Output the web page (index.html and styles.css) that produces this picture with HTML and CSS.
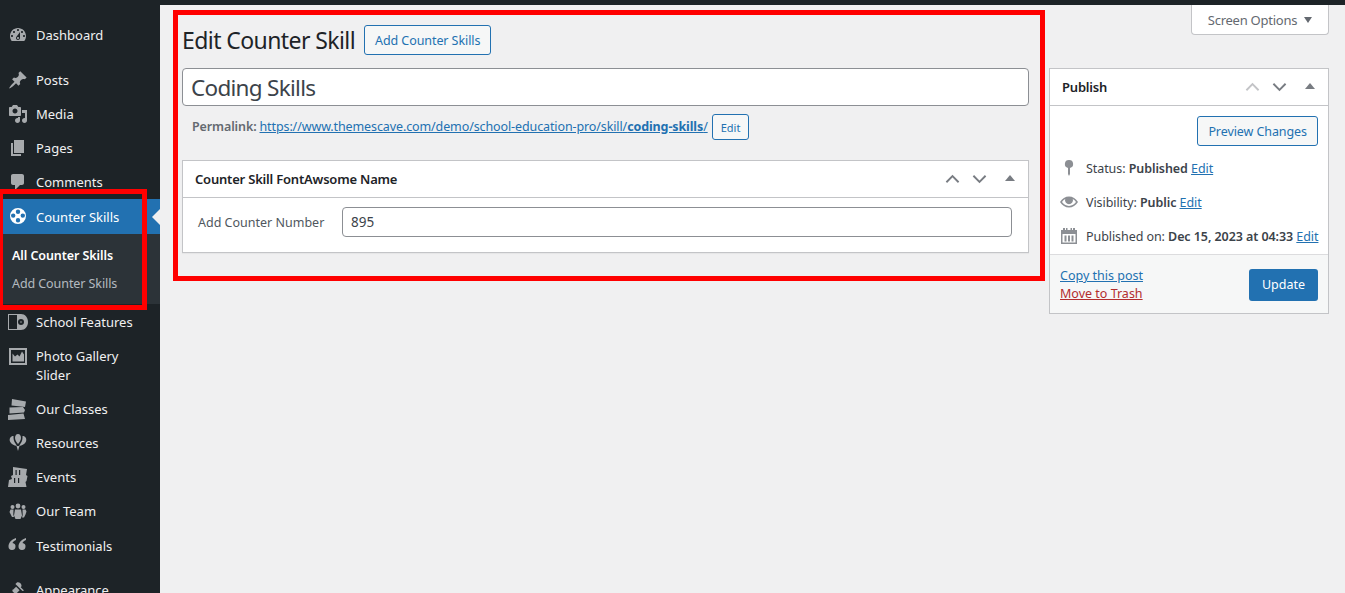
FILE: index.html
```html
<!DOCTYPE html>
<html lang="en">
<head>
<meta charset="utf-8">
<title>Edit Counter Skill</title>
<link rel="stylesheet" href="styles.css">
</head>
<body>
<div class="topbar"></div>
<div class="wrap">
  <nav class="sidebar">
    <ul class="menu">
      <li class="item gap-after"><svg class="ic" viewBox="0 0 20 20"><path fill-rule="evenodd" d="M3.76 16h12.48c1.1-1.37 1.76-3.11 1.76-5 0-4.42-3.58-8-8-8s-8 3.58-8 8c0 1.89.66 3.63 1.76 5zM10 4c.55 0 1 .45 1 1s-.45 1-1 1-1-.45-1-1 .45-1 1-1zM6 6c.55 0 1 .45 1 1s-.45 1-1 1-1-.45-1-1 .45-1 1-1zm8 0c.55 0 1 .45 1 1s-.45 1-1 1-1-.45-1-1 .45-1 1-1zm-5.37 5.55L12 7v6c0 1.1-.9 2-2 2s-2-.9-2-2c0-.57.24-1.08.63-1.45zM4 10c.55 0 1 .45 1 1s-.45 1-1 1-1-.45-1-1 .45-1 1-1zm12 0c.55 0 1 .45 1 1s-.45 1-1 1-1-.45-1-1 .45-1 1-1zm-5 3c0-.55-.45-1-1-1s-1 .45-1 1 .45 1 1 1 1-.45 1-1z"/></svg><span>Dashboard</span></li>
      <li class="item"><svg class="ic" viewBox="0 0 20 20"><path d="M10.44 3.02l1.82-1.82 6.36 6.35-1.83 1.82c-1.05-.68-2.48-.57-3.41.36l-.75.75c-.92.93-1.04 2.35-.35 3.41l-1.83 1.82-2.41-2.41-2.8 2.79c-.42.42-3.38 2.71-3.8 2.29s1.86-3.39 2.28-3.81l2.79-2.79L4.1 9.36l1.83-1.82c1.05.69 2.48.57 3.4-.36l.75-.75c.93-.92 1.05-2.35.36-3.41z"/></svg><span>Posts</span></li>
      <li class="item"><svg class="ic" viewBox="0 0 20 20"><path fill-rule="evenodd" d="M13 11V4c0-.55-.45-1-1-1h-1.67L9 1H5L3.67 3H2c-.55 0-1 .45-1 1v7c0 .55.45 1 1 1h10c.55 0 1-.45 1-1zM7 4.500c1.380 0 2.500 1.120 2.500 2.500S8.380 9.500 7 9.500 4.500 8.380 4.500 7 5.620 4.500 7 4.500zM14 6h5v10.500c0 1.380-1.120 2.500-2.500 2.500S14 17.880 14 16.500s1.120-2.500 2.500-2.500c.17 0 .34.02.5.05V9h-3V6zm-4 8.050V13h2v3.500c0 1.380-1.120 2.500-2.500 2.500S7 17.880 7 16.500 8.120 14 9.500 14c.17 0 .34.02.5.05z"/></svg><span>Media</span></li>
      <li class="item"><svg class="ic" viewBox="0 0 20 20"><path d="M6 15V2h10v13H6zm-1 1h8v2H3V5h2v11z"/></svg><span>Pages</span></li>
      <li class="item"><svg class="ic" viewBox="0 0 20 20"><path d="M5 2h9c1.1 0 2 .9 2 2v7c0 1.1-.9 2-2 2h-2l-5 5v-5H5c-1.1 0-2-.9-2-2V4c0-1.1.9-2 2-2z"/></svg><span>Comments</span></li>
      <li class="item current"><svg class="ic" viewBox="0 0 20 20"><path fill-rule="evenodd" d="M10 2a8 8 0 1 0 0 16 8 8 0 0 0 0-16zM10 3.600a2.200 2.200 0 1 1 0 4.400 2.200 2.200 0 0 1 0-4.400zM5.200 7.400a2.200 2.200 0 1 1 0 4.400 2.200 2.200 0 0 1 0-4.400zM14.800 7.400a2.200 2.200 0 1 1 0 4.400 2.200 2.200 0 0 1 0-4.400zM10 12a2.200 2.200 0 1 1 0 4.400 2.200 2.200 0 0 1 0-4.400z"/></svg><span>Counter Skills</span><i class="notch"></i></li>
      <li class="submenu">
        <a class="sub on">All Counter Skills</a>
        <a class="sub">Add Counter Skills</a>
      </li>
      <li class="item"><svg class="ic" viewBox="0 0 20 20"><path fill-rule="evenodd" d="M0 2h10v16H0zM1 3v14h8V3zM10 2h3c4 0 7 3.500 7 8s-3 8-7 8h-3zM13 7a3 3 0 1 0 0 6 3 3 0 0 0 0-6zM13 9.200a.8.800 0 1 1 0 1.600.8.800 0 0 1 0-1.600z"/></svg><span>School Features</span></li>
      <li class="item tall"><svg class="ic" viewBox="0 0 20 20"><path fill-rule="evenodd" d="M1 2h18v17H1zM3 4v13h14V4zM4.500 15.500V7.500l2.500 3 2.500-2 2 2 2.500-5 2 3v7z"/></svg><span>Photo Gallery Slider</span></li>
      <li class="item"><svg class="ic" viewBox="0 0 20 20"><path d="M4 0l14 2.500-1 5.500-13.500-1.500zM1.500 8.500L15 8l2 3-1 2.500-14.500 1zM0 16l15.500-1.500 1.500 5.500L0 21z"/></svg><span>Our Classes</span></li>
      <li class="item"><svg class="ic" viewBox="0 0 20 20"><path d="M10 1c2 0 3 2 3 4s-2 5-3 6c-1-1-3-4-3-6s1-4 3-4zM5.500 3C2.500 3 1 5.500 2 8.500c1 2.500 4 4 7 4.500L6.500 9C5.500 7 5.500 5 5.500 3zM14.500 3c3 0 4.500 2.500 3.500 5.500-1 2.500-4 4-7 4.500l2.500-4c1-2 1-4 1-6zM8.500 13h3L10 18z"/></svg><span>Resources</span></li>
      <li class="item"><svg class="ic" viewBox="0 0 20 20"><path fill-rule="evenodd" d="M5 0l14 2-1 6 1.500 1-1 5-1 1 1 5H0l1-7 3-1-1-3 2-1zM7.500 3v5h1.200V3zM11 3v5h1.200V3zM6 11v5h1.200v-5zM10 11v5h1.200v-5z"/></svg><span>Events</span></li>
      <li class="item"><svg class="ic" viewBox="0 0 20 20"><circle cx="10" cy="5" r="2.400"/><circle cx="4.500" cy="6" r="2"/><circle cx="15.500" cy="6" r="2"/><path d="M7 8.500h6l1 6-1.500 3.500h-5L6 14.500zM2.500 8.500h3l-.2 5 .7 2.500H4l-1.500-3-1-2zM14.500 8.500h3l1 2-1 3-1.500 3h-2l.7-2.500z"/></svg><span>Our Team</span></li>
      <li class="item gap-after low"><svg class="ic" viewBox="0 0 20 20"><path d="M8 3C3 4.500.5 8 .5 11.500A3.500 3.500 0 1 0 4.500 8C5 6.500 6.500 5.500 8 5zM18 3c-5 1.500-7.500 5-7.500 8.500A3.500 3.500 0 1 0 14.500 8c.5-1.500 2-2.500 3.500-3z"/></svg><span>Testimonials</span></li>
      <li class="item"><svg class="ic" viewBox="0 0 20 20"><path d="M14.480 11.060L7.410 3.990l1.500-1.500c.500-.560 2.300-.470 3.540.760 1.210 1.200 1.320 3.040.760 3.540l-.500.500 3.330 3.330zM5.290 9.520l2.800-2.800 3.530 3.540-2.800 2.800c-.850.850-2.800-.050-3.530-.710s-1.420-1.980-.500-2.830zM2.500 18l3.500-5 1.500 1.500z"/></svg><span>Appearance</span></li>
    </ul>
  </nav>

  <main class="main">
    <div class="screen-row"><button class="screen-tab">Screen Options<i class="caret"></i></button></div>
    <div class="columns">
      <div class="primary">
        <div class="heading">
          <h1>Edit Counter Skill</h1>
          <a class="btn">Add Counter Skills</a>
        </div>
        <input class="title" type="text" value="Coding Skills">
        <div class="permalink">
          <b>Permalink:</b>
          <a class="link">https://www.themescave.com/demo/school-education-pro/skill/<strong>coding-skills</strong>/</a>
          <a class="btn small">Edit</a>
        </div>
        <section class="box">
          <header class="box-head">
            <h2>Counter Skill FontAwsome Name</h2>
            <div class="ctrls">
              <svg class="chev" viewBox="0 0 16 10"><path d="M1.500 8.500L8 2l6.500 6.500"/></svg>
              <svg class="chev" viewBox="0 0 16 10"><path d="M1.500 1.500L8 8l6.500-6.500"/></svg>
              <i class="tri"></i>
            </div>
          </header>
          <div class="field">
            <label>Add Counter Number</label>
            <input type="text" value="895">
          </div>
        </section>
      </div>

      <aside class="publish">
        <header class="box-head pub-head">
          <h2>Publish</h2>
          <div class="ctrls">
            <svg class="chev faint" viewBox="0 0 16 10"><path d="M1.500 8.500L8 2l6.500 6.500"/></svg>
            <svg class="chev" viewBox="0 0 16 10"><path d="M1.500 1.500L8 8l6.500-6.500"/></svg>
            <i class="tri"></i>
          </div>
        </header>
        <div class="pub-body">
          <div class="preview"><a class="btn">Preview Changes</a></div>
          <div class="pub-row"><svg class="pub-ic" viewBox="0 0 20 20"><path d="M10 2a4 4 0 0 1 1 7.900V16l-1 2-1-2V9.900A4 4 0 0 1 10 2z"/></svg><span>Status: <b>Published</b> <a class="link">Edit</a></span></div>
          <div class="pub-row"><svg class="pub-ic" viewBox="0 0 20 20"><path fill-rule="evenodd" d="M1 10c2-3.500 5.500-5.500 9-5.500s7 2 9 5.500c-2 3.500-5.500 5.500-9 5.500S3 13.500 1 10zM3 10c1.500 2.300 4 3.900 7 3.900s5.500-1.600 7-3.900c-.8-1.200-1.900-2.300-3.200-3a4 4 0 1 1-7.600 0C4.900 7.700 3.800 8.800 3 10z"/></svg><span>Visibility: <b>Public</b> <a class="link">Edit</a></span></div>
          <div class="pub-row"><svg class="pub-ic" viewBox="0 0 20 20"><path fill-rule="evenodd" d="M4 2h2v2h1V2h1.500v2h3V2H13v2h1V2h2v2h2v14H2V4h2zM3.500 8v8.500h13V8zM5.500 9.500h2v6h-2zM9 9.500h2v6H9zM12.500 9.500h2v6h-2z"/></svg><span>Published on: <b>Dec 15, 2023 at 04:33</b> <a class="link">Edit</a></span></div>
        </div>
        <footer class="pub-foot">
          <div class="foot-links">
            <a class="link">Copy this post</a>
            <a class="trash">Move to Trash</a>
          </div>
          <a class="update">Update</a>
        </footer>
      </aside>
    </div>
  </main>
</div>
<div class="mark mark-side"></div>
<div class="mark mark-main"></div>
</body>
</html>
```

FILE: styles.css
```css
* { box-sizing: border-box; }
html, body { margin: 0; height: 593px; overflow: hidden; }
body {
  background: #f0f0f1;
  color: #3c434a;
  font: 13px/19px "Noto Sans", "Open Sans", sans-serif;
  position: relative;
}
ul { list-style: none; margin: 0; padding: 0; }
h1, h2 { margin: 0; font-weight: 400; }
.topbar { height: 5px; background: #1d2327; }
.wrap { display: flex; height: 588px; }

.sidebar { width: 160px; flex: none; background: #1d2327; padding-top: 13px; overflow: hidden; }
.item {
  position: relative;
  display: flex;
  align-items: flex-start;
  padding: 8px 24px 6px 36px;
  min-height: 34px;
  color: #f0f0f1;
}
.item.gap-after { margin-bottom: 11px; }
.item.tall { padding-bottom: 7px; }
.item.low { padding-top: 9px; }
.item .ic { position: absolute; left: 8px; top: 7px; width: 20px; height: 20px; fill: #a7aaad; overflow: visible; }
.item.current { background: #2271b1; color: #fff; padding-top: 9px; min-height: 35px; }
.item.current .ic { fill: #fff; }
.notch {
  position: absolute; right: 0; top: 10px;
  border: 8px solid transparent; border-left: 0; border-right-color: #f0f0f1;
}
.submenu { background: #2c3338; padding: 8px 0 6px; margin-bottom: 1px; }
.sub { display: block; padding: 5px 12px; line-height: 18px; height: 28px; color: rgba(240,246,252,.7); font-size: 12.500px; letter-spacing: -.08px; }
.sub.on { color: #fff; font-weight: 600; }

.main { flex: 1; min-width: 0; padding: 0 16px 0 22px; }
.screen-row { display: flex; justify-content: flex-end; height: 30px; }
.screen-tab {
  width: 138px; height: 30px; padding: 2px 0 0;
  background: #fff; border: 1px solid #c3c4c7; border-top: 0;
  border-radius: 0 0 4px 4px; color: #646970;
  font: inherit; letter-spacing: -.25px;
  display: flex; align-items: center; justify-content: center; gap: 7px;
}
.caret { border: 4.500px solid transparent; border-top: 6px solid #646970; border-bottom: 0; margin-top: -2px; }
.columns { display: grid; grid-template-columns: 847px 280px; column-gap: 20px; }

.heading { display: flex; align-items: center; gap: 9px; height: 30px; margin-top: -10px; }
h1 { font-size: 23px; line-height: 30px; color: #1d2327; letter-spacing: -.58px; }
.btn {
  display: inline-block;
  height: 30px; padding: 0 10px;
  border: 1px solid #2271b1; border-radius: 3px;
  background: #f6f7f7; color: #2271b1;
  line-height: 30px; white-space: nowrap; font-size: 12.500px; letter-spacing: -.08px;
}
.btn.small { height: 26px; padding: 0 8px; line-height: 25px; font-size: 11px; }
.title {
  display: block; width: 100%; height: 38px; margin-top: 13px; padding: 0 8px;
  border: 1px solid #8c8f94; border-radius: 4px; background: #fff;
  color: #3c434a; font: 22.500px "Noto Sans", sans-serif; letter-spacing: -.72px; outline: 0;
}
.permalink { display: flex; align-items: center; height: 26px; margin-top: 8px; padding-left: 10px; color: #646970; font-size: 12.500px; letter-spacing: -.11px; white-space: pre; line-height: 24px; }
.permalink b { font-weight: 600; margin-right: 3px; }
.permalink .btn { margin-left: 4px; letter-spacing: 0; }
.link { color: #2271b1; text-decoration: underline; }
.link strong { font-weight: 700; }

.box { margin-top: 20px; background: #fff; border: 1px solid #c3c4c7; box-shadow: 0 1px 1px rgba(0,0,0,.04); }
.box-head {
  display: flex; align-items: center; justify-content: space-between;
  height: 37px; padding: 0 12px; border-bottom: 1px solid #c3c4c7;
}
.box-head h2 { font-size: 13px; font-weight: 600; color: #1d2327; letter-spacing: -.2px; }
.ctrls { display: flex; align-items: center; gap: 12px; }
.chev { width: 15px; height: 10px; fill: none; stroke: #787c82; stroke-width: 2; }
.chev.faint { stroke: #c3c4c7; }
.tri { border: 5px solid transparent; border-bottom: 6px solid #787c82; border-top: 0; margin-left: 6px; margin-right: 1px; margin-top: -2px; }
.field { display: flex; align-items: flex-start; height: 54px; padding: 9px 16px 0 15px; }
.field label { width: 144px; flex: none; color: #50575e; font-size: 12.500px; line-height: 32px; }
.field input {
  flex: 1; min-width: 0; height: 30px; padding: 0 8px;
  border: 1px solid #8c8f94; border-radius: 4px; background: #fff;
  color: #3c434a; font: 13.500px "Noto Sans", sans-serif; outline: 0;
}

.publish { margin-top: 33px; height: 246px; background: #fff; border: 1px solid #c3c4c7; display: flex; flex-direction: column; }
.pub-body { flex: 1; padding: 10px 10px 0; }
.preview { display: flex; justify-content: flex-end; margin-bottom: 5px; height: 30px; }
.pub-row { position: relative; display: flex; align-items: center; height: 34px; padding-left: 26px; font-size: 12.500px; letter-spacing: -.07px; white-space: pre; }
.pub-row b { font-weight: 600; }
.pub-ic { position: absolute; left: -1px; top: 7px; width: 20px; height: 20px; fill: #8c8f94; }
.pub-foot {
  display: flex; justify-content: space-between; align-items: center;
  height: 59px; padding: 2px 10px 0; background: #f6f7f7; border-top: 1px solid #dcdcde;
  font-size: 12.500px;
}
.foot-links { display: flex; flex-direction: column; line-height: 18px; }
.trash { color: #b32d2e; text-decoration: underline; }
.update { width: 69px; height: 32px; border-radius: 3px; background: #2271b1; color: #fff; text-align: center; line-height: 32px; }

.mark { position: absolute; border: 5px solid #f00; pointer-events: none; }
.mark-side { left: -2px; top: 189px; width: 149px; height: 121px; }
.mark-main { left: 173px; top: 10px; width: 872px; height: 271px; }
```
